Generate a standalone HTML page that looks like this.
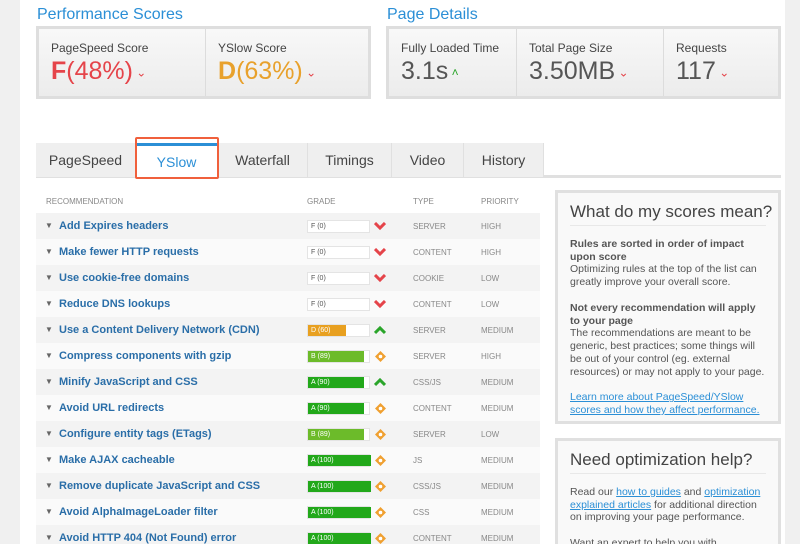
<!DOCTYPE html><html style="overflow:hidden;height:544px"><head><style>
body{margin:0;width:800px;height:544px;overflow:hidden;background:#fff;font-family:"Liberation Sans",sans-serif;position:relative}
.ls{position:absolute;left:0;top:0;width:20px;height:544px;background:#f0f0f0}
.rs{position:absolute;left:785px;top:0;width:15px;height:544px;background:#f0f0f0}
.h{position:absolute;color:#2b8fd6;font-size:16px}
.box{position:absolute;background:linear-gradient(#f8f8f8,#ececec);border:3px solid #dedede;box-sizing:border-box}
.cell{position:absolute;top:0;height:100%;border-right:1px solid #dcdcdc;box-sizing:border-box;padding:12px 0 0 12px}
.cell .l{font-size:12px;color:#444}
.cell .v{font-size:25px;color:#555;margin-top:2px}
.tabs{position:absolute;top:143px;left:36px;height:34px}
.tab{position:absolute;top:0;height:34px;background:#efefef;border-right:1px solid #e0e0e0;text-align:center;line-height:34px;font-size:14px;color:#444;box-sizing:border-box}
.row{position:absolute;left:36px;width:504px;height:26px;font-size:11px}
.row .n{position:absolute;left:23px;top:7px;color:#2a6ea8;font-weight:bold}
.row .t{position:absolute;left:9px;top:8px;font-size:8px;color:#666}
.bar{position:absolute;left:271px;top:7px;width:63px;height:13px;background:#fff;border:1px solid #e4e4e4;box-sizing:border-box}
.bar div{height:100%;font-size:7px;color:#fff;line-height:11px;padding-left:3px;box-sizing:border-box}
.ty,.pr{position:absolute;top:9px;font-size:8px;color:#888}
.ty{left:377px}.pr{left:445px}
.side{position:absolute;left:555px;width:226px;background:#f9f9f9;border:3px solid #e0e0e0;box-sizing:border-box;padding:13px 12px;font-size:10.5px;color:#555;line-height:12.8px;overflow:hidden}
.side h3{font-weight:normal;font-size:17px;color:#444;margin:0 0 12px;padding-bottom:6px;border-bottom:1px solid #e8e8e8;white-space:nowrap}
.side a{color:#2b8fd6}
</style></head><body>
<div class="ls"></div><div class="rs"></div>
<div class="h" style="left:37px;top:6px">Performance Scores</div>
<div class="h" style="left:387px;top:6px">Page Details</div>
<div class="box" style="left:36px;top:26px;width:335px;height:73px">
<div class="cell" style="left:0;width:167px"><div class="l">PageSpeed Score</div><div class="v" style="color:#e5444a"><b style="font-weight:bold">F</b>(48%)<span style="font-size:12px;vertical-align:middle"> ⌄</span></div></div>
<div class="cell" style="left:167px;width:165px;border:none"><div class="l">YSlow Score</div><div class="v" style="color:#e8a12c"><b>D</b>(63%)<span style="font-size:12px;color:#e5444a;vertical-align:middle"> ⌄</span></div></div>
</div>
<div class="box" style="left:386px;top:26px;width:395px;height:73px">
<div class="cell" style="left:0;width:128px"><div class="l">Fully Loaded Time</div><div class="v">3.1s<span style="font-size:12px;color:#2aa52a;vertical-align:middle"> ˄</span></div></div>
<div class="cell" style="left:128px;width:147px"><div class="l">Total Page Size</div><div class="v">3.50MB<span style="font-size:12px;color:#e5444a;vertical-align:middle"> ⌄</span></div></div>
<div class="cell" style="left:275px;width:114px;border:none"><div class="l">Requests</div><div class="v">117<span style="font-size:12px;color:#e5444a;vertical-align:middle"> ⌄</span></div></div>
</div>
<div style="position:absolute;left:36px;top:175px;width:745px;height:3px;background:#e0e0e0"></div>
<div class="tabs">
<div class="tab" style="left:0;width:100px">PageSpeed</div>
<div class="tab" style="left:100px;width:82px;background:#fff;color:#2b8fd6;border-top:3px solid #2b8fd6;height:36px;line-height:32px">YSlow</div>
<div class="tab" style="left:182px;width:90px">Waterfall</div>
<div class="tab" style="left:272px;width:84px">Timings</div>
<div class="tab" style="left:356px;width:72px">Video</div>
<div class="tab" style="left:428px;width:80px">History</div>
</div>
<div style="position:absolute;left:135px;top:137px;width:84px;height:42px;border:2px solid #f0603c;box-sizing:border-box;border-radius:2px"></div>
<div style="position:absolute;top:197px;font-size:8px;color:#888;left:46px">RECOMMENDATION</div>
<div style="position:absolute;top:197px;font-size:8px;color:#888;left:307px">GRADE</div>
<div style="position:absolute;top:197px;font-size:8px;color:#888;left:413px">TYPE</div>
<div style="position:absolute;top:197px;font-size:8px;color:#888;left:481px">PRIORITY</div>
<div id="rows"></div>
<div class="side" style="top:190px;height:234px"><h3>What do my scores mean?</h3><b>Rules are sorted in order of impact upon score</b><br>Optimizing rules at the top of the list can greatly improve your overall score.<br><br><b>Not every recommendation will apply to your page</b><br>The recommendations are meant to be generic, best practices; some things will be out of your control (eg. external resources) or may not apply to your page.<br><br><a href="#">Learn more about PageSpeed/YSlow scores and how they affect performance.</a></div>
<div class="side" style="top:438px;height:120px"><h3>Need optimization help?</h3>Read our <a href="#">how to guides</a> and <a href="#">optimization explained articles</a> for additional direction on improving your page performance.<br><br>Want an expert to help you with</div>
<script>
var d=[["Add Expires headers","F (0)",0,"","d","SERVER","HIGH"],["Make fewer HTTP requests","F (0)",0,"","d","CONTENT","HIGH"],["Use cookie-free domains","F (0)",0,"","d","COOKIE","LOW"],["Reduce DNS lookups","F (0)",0,"","d","CONTENT","LOW"],["Use a Content Delivery Network (CDN)","D (60)",38,"#e8a020","u","SERVER","MEDIUM"],["Compress components with gzip","B (89)",56,"#6cbb2a","o","SERVER","HIGH"],["Minify JavaScript and CSS","A (90)",56,"#22a81a","u","CSS/JS","MEDIUM"],["Avoid URL redirects","A (90)",56,"#22a81a","o","CONTENT","MEDIUM"],["Configure entity tags (ETags)","B (89)",56,"#6cbb2a","o","SERVER","LOW"],["Make AJAX cacheable","A (100)",63,"#22a81a","o","JS","MEDIUM"],["Remove duplicate JavaScript and CSS","A (100)",63,"#22a81a","o","CSS/JS","MEDIUM"],["Avoid AlphaImageLoader filter","A (100)",63,"#22a81a","o","CSS","MEDIUM"],["Avoid HTTP 404 (Not Found) error","A (100)",63,"#22a81a","o","CONTENT","MEDIUM"]];
var h="";d.forEach(function(r,i){var ic;
if(r[4]=="d")ic='<svg style="position:absolute;left:338px;top:9px" width="12" height="9"><path d="M1 1L6 6L11 1" stroke="#e5444a" stroke-width="3" fill="none"/></svg>';
if(r[4]=="u")ic='<svg style="position:absolute;left:338px;top:9px" width="12" height="9"><path d="M1 7L6 2L11 7" stroke="#2aa52a" stroke-width="3" fill="none"/></svg>';
if(r[4]=="o")ic='<svg style="position:absolute;left:338px;top:7px" width="13" height="13"><path d="M6.5 1L12 6.5L6.5 12L1 6.5Z" fill="#f0a030"/><circle cx="6.5" cy="6.5" r="1.8" fill="#fff"/></svg>';
var bar=r[2]?'<div style="width:'+r[2]+'px;background:'+r[3]+'">'+r[1]+'</div>':'<div style="color:#555">'+r[1]+'</div>';
h+='<div class="row" style="top:'+(213+i*26)+'px;background:'+(i%2?'#fafafa':'#f3f3f3')+'"><span class="t">▼</span><span class="n">'+r[0]+'</span><div class="bar">'+bar+'</div>'+ic+'<span class="ty">'+r[5]+'</span><span class="pr">'+r[6]+'</span></div>';});
document.getElementById("rows").innerHTML=h;
</script>
</body></html>
